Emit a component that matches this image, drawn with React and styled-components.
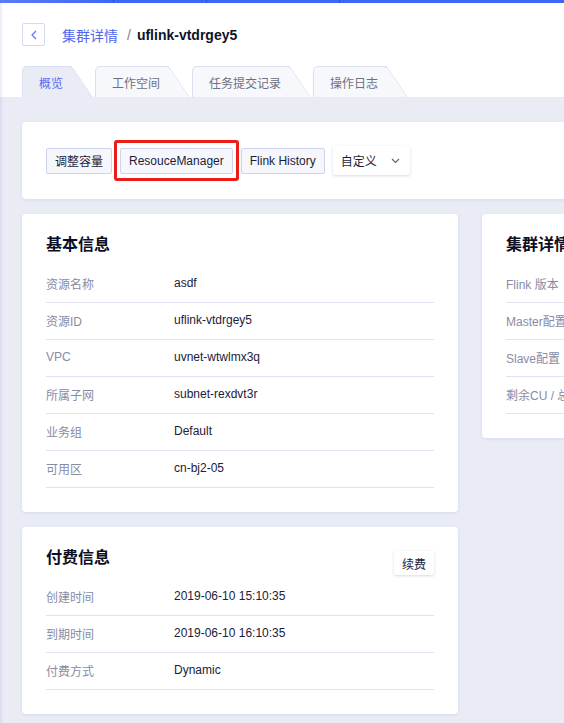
import styled, { createGlobalStyle } from "styled-components";

const GlobalStyle = createGlobalStyle`
  * { box-sizing: border-box; }
  body {
    margin: 0;
    overflow: hidden;
    background: #e9ebf5;
    font-family: "Liberation Sans", Arial, "Noto Sans CJK SC", sans-serif;
    color: #1d2039;
  }
`;

const basicInfo = [
  ["资源名称", "asdf"],
  ["资源ID", "uflink-vtdrgey5"],
  ["VPC", "uvnet-wtwlmx3q"],
  ["所属子网", "subnet-rexdvt3r"],
  ["业务组", "Default"],
  ["可用区", "cn-bj2-05"],
];

const clusterInfo = [
  ["Flink 版本", "1.7.2"],
  ["Master配置", "2核 4G"],
  ["Slave配置", "4核 8G"],
  ["剩余CU / 总CU", "8 / 16"],
];

const payInfo = [
  ["创建时间", "2019-06-10 15:10:35"],
  ["到期时间", "2019-06-10 16:10:35"],
  ["付费方式", "Dynamic"],
];

const tabs = ["概览", "工作空间", "任务提交记录", "操作日志"];

export default function App() {
  return (
    <Page>
      <GlobalStyle />
      <TopBar>
        <BarSegment $w={114} />
        <BarSegment $w={93} />
        <BarSegment $w={133} />
        <BarSegment $w={300} />
      </TopBar>
      <Header>
        <TitleRow>
          <BackButton>
            <svg width="6" height="10" viewBox="0 0 6 10">
              <path d="M5 1 L1 5 L5 9" fill="none" stroke="#6272f2" strokeWidth="1.2" />
            </svg>
          </BackButton>
          <Crumb>集群详情</Crumb>
          <Slash>/</Slash>
          <Name>uflink-vtdrgey5</Name>
        </TitleRow>
        <Tabs>
          {tabs.map((t, i) => (
            <Tab key={t} $active={i === 0}>{t}</Tab>
          ))}
        </Tabs>
      </Header>
      <Main>
        <Toolbar>
          <Button>调整容量</Button>
          <Highlight>
            <Button>ResouceManager</Button>
          </Highlight>
          <Button>Flink History</Button>
          <Select>
            自定义
            <svg width="9" height="6" viewBox="0 0 9 6">
              <path d="M1 1 L4.5 4.5 L8 1" fill="none" stroke="#5b6078" strokeWidth="1.1" />
            </svg>
          </Select>
        </Toolbar>
        <Grid>
          <Card>
            <CardHead>
              <CardTitle>基本信息</CardTitle>
            </CardHead>
            {basicInfo.map(([k, v]) => (
              <Row key={k}>
                <Label>{k}</Label>
                <Value>{v}</Value>
              </Row>
            ))}
          </Card>
          <Card>
            <CardHead>
              <CardTitle>集群详情</CardTitle>
            </CardHead>
            {clusterInfo.map(([k, v]) => (
              <Row key={k}>
                <Label>{k}</Label>
                <Value>{v}</Value>
              </Row>
            ))}
          </Card>
          <Card>
            <CardHead>
              <CardTitle>付费信息</CardTitle>
              <SmallButton>续费</SmallButton>
            </CardHead>
            {payInfo.map(([k, v]) => (
              <Row key={k}>
                <Label>{k}</Label>
                <Value>{v}</Value>
              </Row>
            ))}
          </Card>
        </Grid>
      </Main>
    </Page>
  );
}

const Page = styled.div`
  width: 940px;
  min-height: 100vh;
  background: #e9ebf5;
`;

const TopBar = styled.div`
  display: flex;
  height: 3px;
  background: linear-gradient(to right, #5b7bf6 0, #3f67f6 110px, #3d65f6 100%);
`;

const BarSegment = styled.div`
  width: ${(p) => p.$w}px;
  height: 100%;
  border-right: 1px solid #2c52d6;
`;

const Header = styled.div`
  background: #fff;
  padding: 20px 0 0 22px;
  box-shadow: inset 3px 0 3px -2px rgba(90, 100, 170, 0.18);
`;

const TitleRow = styled.div`
  display: flex;
  align-items: center;
  height: 23px;
`;

const BackButton = styled.div`
  width: 23px;
  height: 23px;
  border: 1px solid #d6daf1;
  border-radius: 2px;
  display: flex;
  align-items: center;
  justify-content: center;
  margin-right: 17px;
`;

const Crumb = styled.span`
  font-size: 14px;
  color: #5267ef;
`;

const Slash = styled.span`
  font-size: 14px;
  color: #7d8298;
  margin: 0 6px 0 9px;
`;

const Name = styled.span`
  font-size: 14px;
  font-weight: bold;
  color: #0f1226;
`;

const Tabs = styled.div`
  display: flex;
  margin-top: 20px;
`;

const Tab = styled.div`
  position: relative;
  z-index: 0;
  height: 31px;
  display: flex;
  align-items: center;
  padding: 0 9px 0 16px;
  margin-right: 23px;
  font-size: 12px;
  color: ${(p) => (p.$active ? "#5a6cf0" : "#6b7084")};
  background: ${(p) => (p.$active ? "#e9ebf5" : "#f7f8fc")};
  border-left: 1px solid #dcdff0;
  border-top: 1px solid #dcdff0;
  border-top-left-radius: 5px;

  &::after {
    content: "";
    position: absolute;
    z-index: -1;
    top: -1px;
    bottom: 0;
    right: 0;
    width: 24px;
    background: inherit;
    border-top: 1px solid #dcdff0;
    border-right: 1px solid #dcdff0;
    border-top-right-radius: 4px;
    transform-origin: top left;
    transform: skewX(34deg);
  }
`;

const Main = styled.div`
  padding: 25px 22px;
  box-shadow: inset 3px 0 3px -2px rgba(90, 100, 170, 0.15);
  min-height: 630px;
`;

const Toolbar = styled.div`
  background: #fff;
  border-radius: 4px;
  box-shadow: 0 1px 3px rgba(70, 80, 150, 0.1);
  padding: 24px 24px 24px;
  display: flex;
  align-items: center;
  gap: 8px;
`;

const Button = styled.div`
  height: 26px;
  padding: 0 8px;
  display: flex;
  align-items: center;
  font-size: 12px;
  color: #1b1e38;
  background: #f6f7fc;
  border: 1px solid #cfd4ee;
  border-radius: 2px;
  white-space: nowrap;
`;

const Highlight = styled.div`
  position: relative;

  &::after {
    content: "";
    position: absolute;
    inset: -8px -6px -7px -6px;
    border: 3px solid #ec1c16;
    border-radius: 3px;
  }
`;

const Select = styled.div`
  height: 29px;
  padding: 0 10px 0 8px;
  display: flex;
  align-items: center;
  gap: 14px;
  font-size: 12px;
  color: #1b1e38;
  background: #fff;
  border-radius: 2px;
  box-shadow: 0 1px 3px rgba(60, 70, 140, 0.2);
`;

const Grid = styled.div`
  display: grid;
  grid-template-columns: 436px 436px;
  column-gap: 24px;
  row-gap: 15px;
  margin-top: 15px;
  align-items: start;
`;

const Card = styled.div`
  background: #fff;
  border-radius: 4px;
  box-shadow: 0 1px 3px rgba(70, 80, 150, 0.1);
  padding: 19px 24px 24px;
`;

const CardHead = styled.div`
  display: flex;
  justify-content: space-between;
  align-items: flex-start;
  height: 24px;
  margin-bottom: 9px;
`;

const CardTitle = styled.div`
  font-size: 16px;
  line-height: 24px;
  font-weight: bold;
  color: #0c0f24;
`;

const SmallButton = styled.div`
  margin-top: 5px;
  width: 40px;
  height: 24px;
  display: flex;
  align-items: center;
  justify-content: center;
  font-size: 12px;
  color: #1b1e38;
  background: #fff;
  border-radius: 2px;
  box-shadow: 0 1px 3px rgba(60, 70, 140, 0.2);
`;

const Row = styled.div`
  display: flex;
  align-items: center;
  height: 37px;
  padding-bottom: 2px;
  border-bottom: 1px solid #e1e4f0;
  font-size: 12px;
`;

const Label = styled.div`
  width: 128px;
  color: #878ca5;
  white-space: nowrap;
`;

const Value = styled.div`
  color: #1d2039;
  white-space: nowrap;
`;
